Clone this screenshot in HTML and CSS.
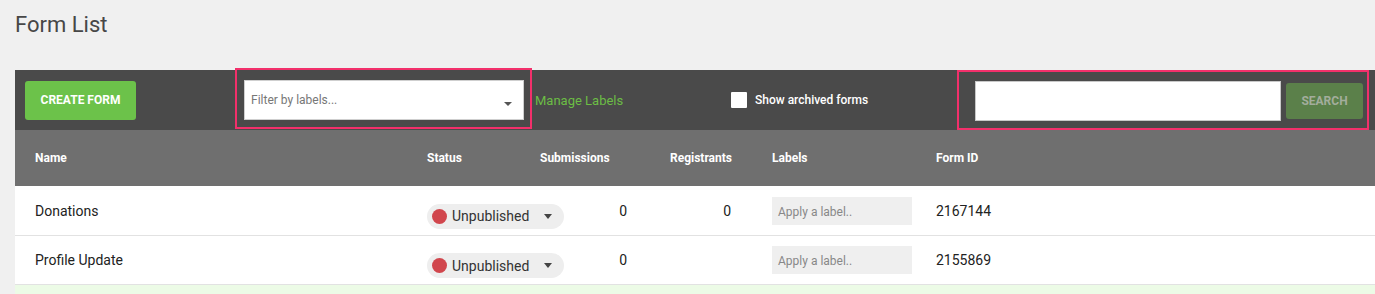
FILE: index.html
```html
<!DOCTYPE html>
<html lang="en">
<head>
<meta charset="utf-8">
<title>Form List</title>
<link rel="stylesheet" href="styles.css">
</head>
<body>
<div class="page">
  <h1 class="title">Form List</h1>

  <div class="toolbar">
    <button class="btn-create">CREATE FORM</button>
    <div class="highlight hl-filter">
      <div class="select">
        <span class="placeholder">Filter by labels...</span>
        <span class="caret"></span>
      </div>
    </div>
    <a class="manage" href="#">Manage Labels</a>
    <label class="archived"><span class="checkbox"></span><span>Show archived forms</span></label>
    <div class="highlight hl-search">
      <div class="search-input"></div>
      <button class="btn-search">SEARCH</button>
    </div>
  </div>

  <div class="table">
    <div class="row head">
      <div>Name</div>
      <div>Status</div>
      <div>Submissions</div>
      <div>Registrants</div>
      <div>Labels</div>
      <div>Form ID</div>
    </div>
    <div class="row body">
      <div class="name">Donations</div>
      <div class="status"><span class="pill"><span class="dot"></span><span class="pill-text">Unpublished</span><span class="pill-caret"></span></span></div>
      <div class="num sub">0</div>
      <div class="num reg">0</div>
      <div class="labels"><span class="label-input">Apply a label..</span></div>
      <div class="fid">2167144</div>
    </div>
    <div class="row body">
      <div class="name">Profile Update</div>
      <div class="status"><span class="pill"><span class="dot"></span><span class="pill-text">Unpublished</span><span class="pill-caret"></span></span></div>
      <div class="num sub">0</div>
      <div class="num reg"></div>
      <div class="labels"><span class="label-input">Apply a label..</span></div>
      <div class="fid">2155869</div>
    </div>
    <div class="row body new"></div>
  </div>
</div>
</body>
</html>
```

FILE: styles.css
```css
* { box-sizing: border-box; }
html, body { margin: 0; padding: 0; }
body {
  background: #f0f0f0;
  font-family: Roboto, "Liberation Sans", sans-serif;
  color: #333;
  overflow: hidden;
}
.page { padding-left: 15px; }

.title {
  margin: 12px 0 32px;
  font-size: 22px;
  line-height: 26px;
  font-weight: 400;
  color: #474747;
}

.toolbar {
  height: 60px;
  background: #4a4a4a;
  display: flex;
  align-items: center;
}
.btn-create {
  margin-left: 10px;
  width: 111px;
  height: 39px;
  border: 0;
  border-radius: 3px;
  background: #6cc24a;
  color: #fff;
  font-family: Roboto, sans-serif;
  font-weight: 700;
  font-size: 12px;
  padding: 0;
}
.highlight { border: 2px solid #f2306b; }
.hl-filter {
  align-self: flex-start;
  margin-top: -2px;
  margin-left: 99px;
  width: 297px;
  height: 61px;
  padding: 10px 6px 7px 7px;
}
.select {
  height: 40px;
  background: #fff;
  border: 1px solid #cfcfcf;
  display: flex;
  align-items: center;
  justify-content: space-between;
  padding: 0 11px 0 6px;
}
.placeholder { font-size: 12px; color: #777; }
.caret {
  width: 0; height: 0;
  border-left: 4px solid transparent;
  border-right: 4px solid transparent;
  border-top: 4px solid #555;
  margin-top: 7px;
}
.manage {
  margin-left: 3px;
  width: 196px;
  font-size: 13px;
  color: #6cbd45;
  text-decoration: none;
}
.archived {
  display: flex;
  align-items: center;
  gap: 8px;
  font-size: 12px;
  font-weight: 500;
  color: #fff;
}
.checkbox {
  width: 16px; height: 16px;
  background: #fff;
  border-radius: 1px;
}
.hl-search {
  margin-left: auto;
  margin-right: 6px;
  width: 412px;
  height: 60px;
  display: flex;
  align-items: center;
  padding: 2px 4px 0 16px;
  gap: 5px;
}
.search-input {
  width: 306px;
  height: 40px;
  background: #fff;
  border: 1px solid #c8c8c8;
}
.btn-search {
  width: 77px;
  height: 36px;
  border: 0;
  border-radius: 3px;
  background: #5b804a;
  color: #a3ad9c;
  font-family: Roboto, sans-serif;
  font-weight: 700;
  font-size: 12px;
  padding: 0;
}

.row {
  display: grid;
  grid-template-columns: 392px 113px 130px 102px 164px 1fr;
  padding-left: 20px;
  align-items: center;
}
.head {
  height: 56px;
  background: #6f6f6f;
  color: #fff;
  font-size: 12px;
  font-weight: 700;
}
.body {
  height: 49px;
  background: #fff;
  border-bottom: 1px solid #e2e2e2;
  font-size: 14px;
  color: #222;
}
.head + .body { height: 50px; }
.body.new { background: #ecfbe6; }
.name { color: #222; }
.status { margin-top: 11px; }
.pill {
  display: inline-flex;
  align-items: center;
  width: 137px;
  height: 25px;
  border-radius: 13px;
  background: #eeeeee;
  padding: 0 0 0 5px;
  white-space: nowrap;
}
.dot {
  width: 15px; height: 15px;
  border-radius: 50%;
  background: #d1464d;
  flex: none;
}
.pill-text { margin-left: 5px; color: #333; }
.pill-caret {
  margin-left: 15px;
  width: 0; height: 0;
  border-left: 4.5px solid transparent;
  border-right: 4.5px solid transparent;
  border-top: 5px solid #444;
}
.num { text-align: right; }
.num.sub { padding-right: 43px; }
.num.reg { padding-right: 41px; }
.label-input {
  display: flex;
  align-items: center;
  width: 140px;
  height: 28px;
  background: #efefef;
  padding-left: 6px;
  padding-top: 2px;
  font-size: 12px;
  color: #888;
}
.fid { color: #222; }
```
